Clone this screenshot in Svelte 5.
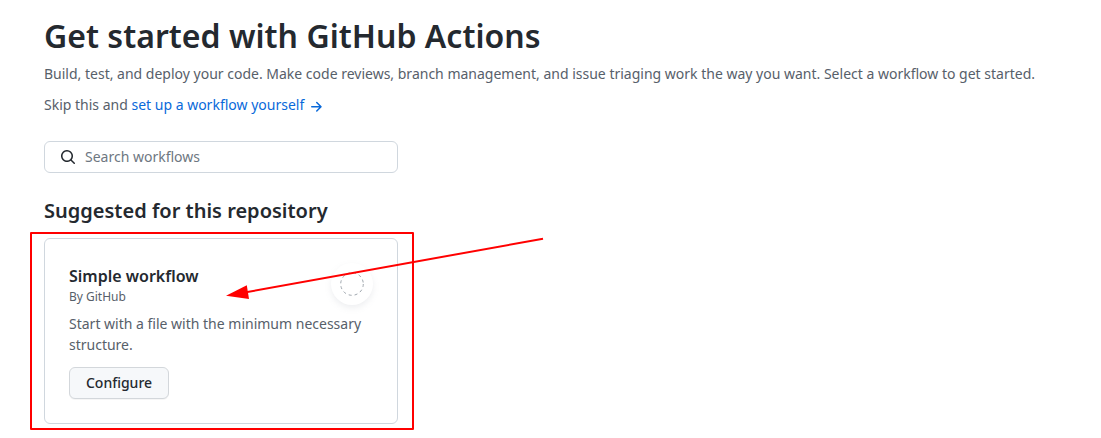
<script>
  let query = $state('');
</script>

<main>
  <h1>Get started with GitHub Actions</h1>
  <p class="intro">Build, test, and deploy your code. Make code reviews, branch management, and issue triaging work the way you want. Select a workflow to get started.</p>
  <p class="skip">Skip this and <span class="link">set up a workflow yourself
    <svg width="16" height="16" viewBox="0 0 16 16" fill="currentColor"><path d="M8.22 2.97a.75.75 0 0 1 1.06 0l4.25 4.25a.75.75 0 0 1 0 1.06l-4.25 4.25a.75.75 0 0 1-1.06-1.06l2.97-2.97H3.75a.75.75 0 0 1 0-1.5h7.44L8.22 4.03a.75.75 0 0 1 0-1.06z"/></svg></span></p>
  <label class="search">
    <svg width="16" height="16" viewBox="0 0 16 16" fill="currentColor"><path fill-rule="evenodd" d="M11.5 7a4.499 4.499 0 1 1-8.998 0A4.499 4.499 0 0 1 11.5 7zm-.82 4.74a6 6 0 1 1 1.06-1.06l3.04 3.04a.75.75 0 1 1-1.06 1.06l-3.04-3.04z"/></svg>
    <input placeholder="Search workflows" bind:value={query} />
  </label>
  <h2>Suggested for this repository</h2>
  <section class="card">
    <div class="head">
      <div>
        <h3>Simple workflow</h3>
        <p class="by">By GitHub</p>
      </div>
      <div class="badge">
        <svg width="24" height="24" viewBox="0 0 24 24" fill="none" stroke="#959da5"><circle cx="12" cy="12" r="11.3" stroke-width=".9" stroke-dasharray="3 3"/></svg>
      </div>
    </div>
    <p class="desc">Start with a file with the minimum necessary structure.</p>
    <button>Configure</button>
  </section>
  <div class="frame"></div>
  <svg class="arrow" width="1101" height="438" viewBox="0 0 1101 438"><path d="M543 238.700L246 292.300" stroke="#f00" stroke-width="2"/><path d="M226 295.800L246.800 285.200L249 299Z" fill="#f00"/></svg>
</main>

<style>
  :global(body) { background: #fff; overflow: hidden; }
  * { box-sizing: border-box; }
  main { position: relative; width: 1101px; height: 438px; padding: 12px 44px 0; overflow: hidden; font: 14px/21px "Noto Sans", sans-serif; color: #24292f; }
  h1, h2, h3, p { margin: 0; }
  h1 { font-size: 32px; line-height: 48px; font-weight: 600; letter-spacing: .02px; white-space: nowrap; }
  .intro { margin-top: 3px; color: #57606a; white-space: nowrap; }
  .skip { margin-top: 10px; height: 21px; color: #57606a; }
  .link { color: #0969da; }
  .link svg { vertical-align: -5px; }
  .search { display: flex; align-items: center; width: 354px; height: 32px; margin-top: 26px; padding: 0 15px; border: 1px solid #d0d7de; border-radius: 6px; }
  input { flex: 1; min-width: 0; margin-left: 9px; padding: 0 0 2px; border: 0; outline: 0; background: none; color: #24292f; font: inherit; }
  input::placeholder { color: #6e7781; opacity: 1; }
  h2 { margin-top: 23px; font-size: 20px; line-height: 30px; font-weight: 600; }
  .card { width: 354px; height: 186px; margin-top: 12px; padding: 24px; border: 1px solid #d0d7de; border-radius: 6px; }
  .head { display: flex; justify-content: space-between; }
  h3 { margin-top: 1px; font-size: 16px; line-height: 24px; font-weight: 600; }
  .by { color: #57606a; font-size: 12px; line-height: 18px; }
  .badge { display: flex; align-items: center; justify-content: center; width: 42px; height: 42px; border-radius: 50%; background: #fff; box-shadow: 0 3px 6px #8c959f26; }
  .badge svg { margin-left: -1px; }
  .desc { margin-top: 7px; color: #57606a; }
  button { width: 100px; height: 32px; margin-top: 12px; padding: 0; border: 1px solid #d3d7db; border-radius: 6px; background: #f6f8fa; box-shadow: 0 1px 0 #1b1f240a; color: #24292f; font: 500 14px/20px "Noto Sans", sans-serif; }
  .frame { position: absolute; left: 30px; top: 232px; width: 384px; height: 198px; border: 2px solid #f00; border-radius: 1px; }
  .arrow { position: absolute; left: 0; top: 0; }
</style>
